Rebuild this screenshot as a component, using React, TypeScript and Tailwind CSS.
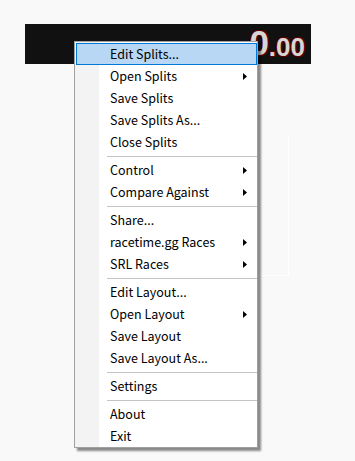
type MenuEntry = { label: string; sub?: boolean; active?: boolean } | "sep";

const entries: MenuEntry[] = [
  { label: "Edit Splits...", active: true },
  { label: "Open Splits", sub: true },
  { label: "Save Splits" },
  { label: "Save Splits As..." },
  { label: "Close Splits" },
  "sep",
  { label: "Control", sub: true },
  { label: "Compare Against", sub: true },
  "sep",
  { label: "Share..." },
  { label: "racetime.gg Races", sub: true },
  { label: "SRL Races", sub: true },
  "sep",
  { label: "Edit Layout..." },
  { label: "Open Layout", sub: true },
  { label: "Save Layout" },
  { label: "Save Layout As..." },
  "sep",
  { label: "Settings" },
  "sep",
  { label: "About" },
  { label: "Exit" },
];

function Arrow() {
  return (
    <svg width="4" height="7" viewBox="0 0 4 7" className="ml-auto shrink-0">
      <path d="M0 0 L4 3.5 L0 7 Z" fill="#000" />
    </svg>
  );
}

function ContextMenu() {
  return (
    <div className="absolute left-[74px] top-[41px] flex w-[184px] flex-col border border-[#a0a0a0] bg-[linear-gradient(to_right,#f3f3f3_24px,#ffffff_24px)] pt-[1px] shadow-[3px_3px_2px_rgba(0,0,0,0.45)]">
      {entries.map((e, i) =>
        e === "sep" ? (
          <div key={i} className="flex h-[6px] items-center pl-[32px]">
            <div className="h-px w-full bg-[#c4c4c4]" />
          </div>
        ) : (
          <div
            key={i}
            className={
              e.active
                ? "ml-[1px] flex h-[22px] items-center border border-[#0078d7] bg-[#b7d7f4] pl-[33px] pr-[9px]"
                : "ml-[1px] flex h-[22px] items-center border border-transparent pl-[33px] pr-[9px]"
            }
          >
            <span className="text-[12.5px] leading-[16px] text-black">{e.label}</span>
            {e.sub && <Arrow />}
          </div>
        )
      )}
    </div>
  );
}

export default function App() {
  return (
    <div className="relative h-[461px] w-[355px] overflow-hidden bg-[#f9f9f9] pl-[25px] pt-[24px] font-['Microsoft_YaHei','Noto_Sans_CJK_SC',sans-serif]">
      <div className="flex h-[40px] w-[286px] items-end justify-end bg-[#111111] pr-[6px] pb-[3px] font-['Liberation_Sans',sans-serif] font-bold text-[#d6d6d6] [text-shadow:0_0_1px_#6a0a0a,1px_1px_0_#5a0000,-1px_-1px_0_#5a0000,1px_-1px_0_#5a0000,-1px_1px_0_#5a0000]">
        <span className="text-[35px] leading-[36px]">0</span>
        <span className="text-[26px] leading-[28px]">.00</span>
      </div>
      <div className="ml-[233px] mt-[72px] h-[140px] w-[31px] border-r border-b border-white" />
      <ContextMenu />
    </div>
  );
}
